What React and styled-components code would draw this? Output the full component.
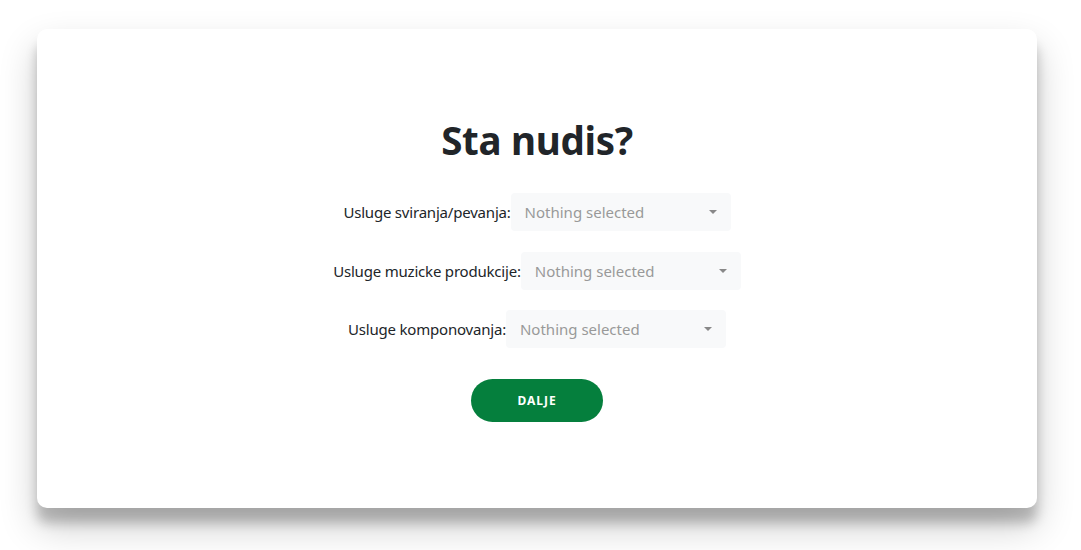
import React from "react";
import styled, { createGlobalStyle } from "styled-components";

const Global = createGlobalStyle`
  html, body { margin: 0; padding: 0; background: #fff; }
  body { font-family: "Noto Sans", "Open Sans", sans-serif; color: #212529; }
  * { box-sizing: border-box; }
`;

const Page = styled.div`
  width: 1081px;
  height: 550px;
  padding: 29px 0 0 37px;
`;

const Card = styled.div`
  width: 1000px;
  height: 479px;
  background: #fff;
  border-radius: 10px;
  box-shadow: 0 19px 38px rgba(0, 0, 0, 0.2), 0 15px 12px rgba(0, 0, 0, 0.22);
  display: flex;
  flex-direction: column;
  align-items: center;
  padding-top: 87px;
`;

const Title = styled.h1`
  margin: 0 0 29px;
  font-size: 38.5px;
  font-weight: 700;
  line-height: 48px;
  color: #212529;
  letter-spacing: -0.3px;
`;

const Row = styled.div`
  display: flex;
  align-items: center;
  height: 38px;
  margin-bottom: ${(p) => p.$gap}px;
`;

const Label = styled.label`
  font-size: 15px;
  color: #212529;
  letter-spacing: -0.2px;
`;

const Select = styled.div`
  width: 220px;
  height: 38px;
  background: #f8f9fa;
  border-radius: 4px;
  display: flex;
  align-items: center;
  justify-content: space-between;
  padding: 0 14px 0 14px;
  font-size: 15px;
  color: #999;
`;

const Caret = styled.span`
  width: 0;
  height: 0;
  border-left: 4px solid transparent;
  border-right: 4px solid transparent;
  border-top: 4px solid #888;
`;

const Button = styled.button`
  margin-top: 11px;
  width: 132px;
  height: 43px;
  border: none;
  border-radius: 22px;
  background: #057f3d;
  color: #fff;
  font-family: "Noto Sans", sans-serif;
  font-weight: 700;
  font-size: 12px;
  letter-spacing: 1px;
`;

const rows = [
  { label: "Usluge sviranja/pevanja:", gap: 21 },
  { label: "Usluge muzicke produkcije:", gap: 20 },
  { label: "Usluge komponovanja:", gap: 20 },
];

export default function App() {
  return (
    <Page>
      <Global />
      <Card>
        <Title>Sta nudis?</Title>
        {rows.map((r) => (
          <Row key={r.label} $gap={r.gap}>
            <Label>{r.label}</Label>
            <Select>
              <span>Nothing selected</span>
              <Caret />
            </Select>
          </Row>
        ))}
        <Button>DALJE</Button>
      </Card>
    </Page>
  );
}
